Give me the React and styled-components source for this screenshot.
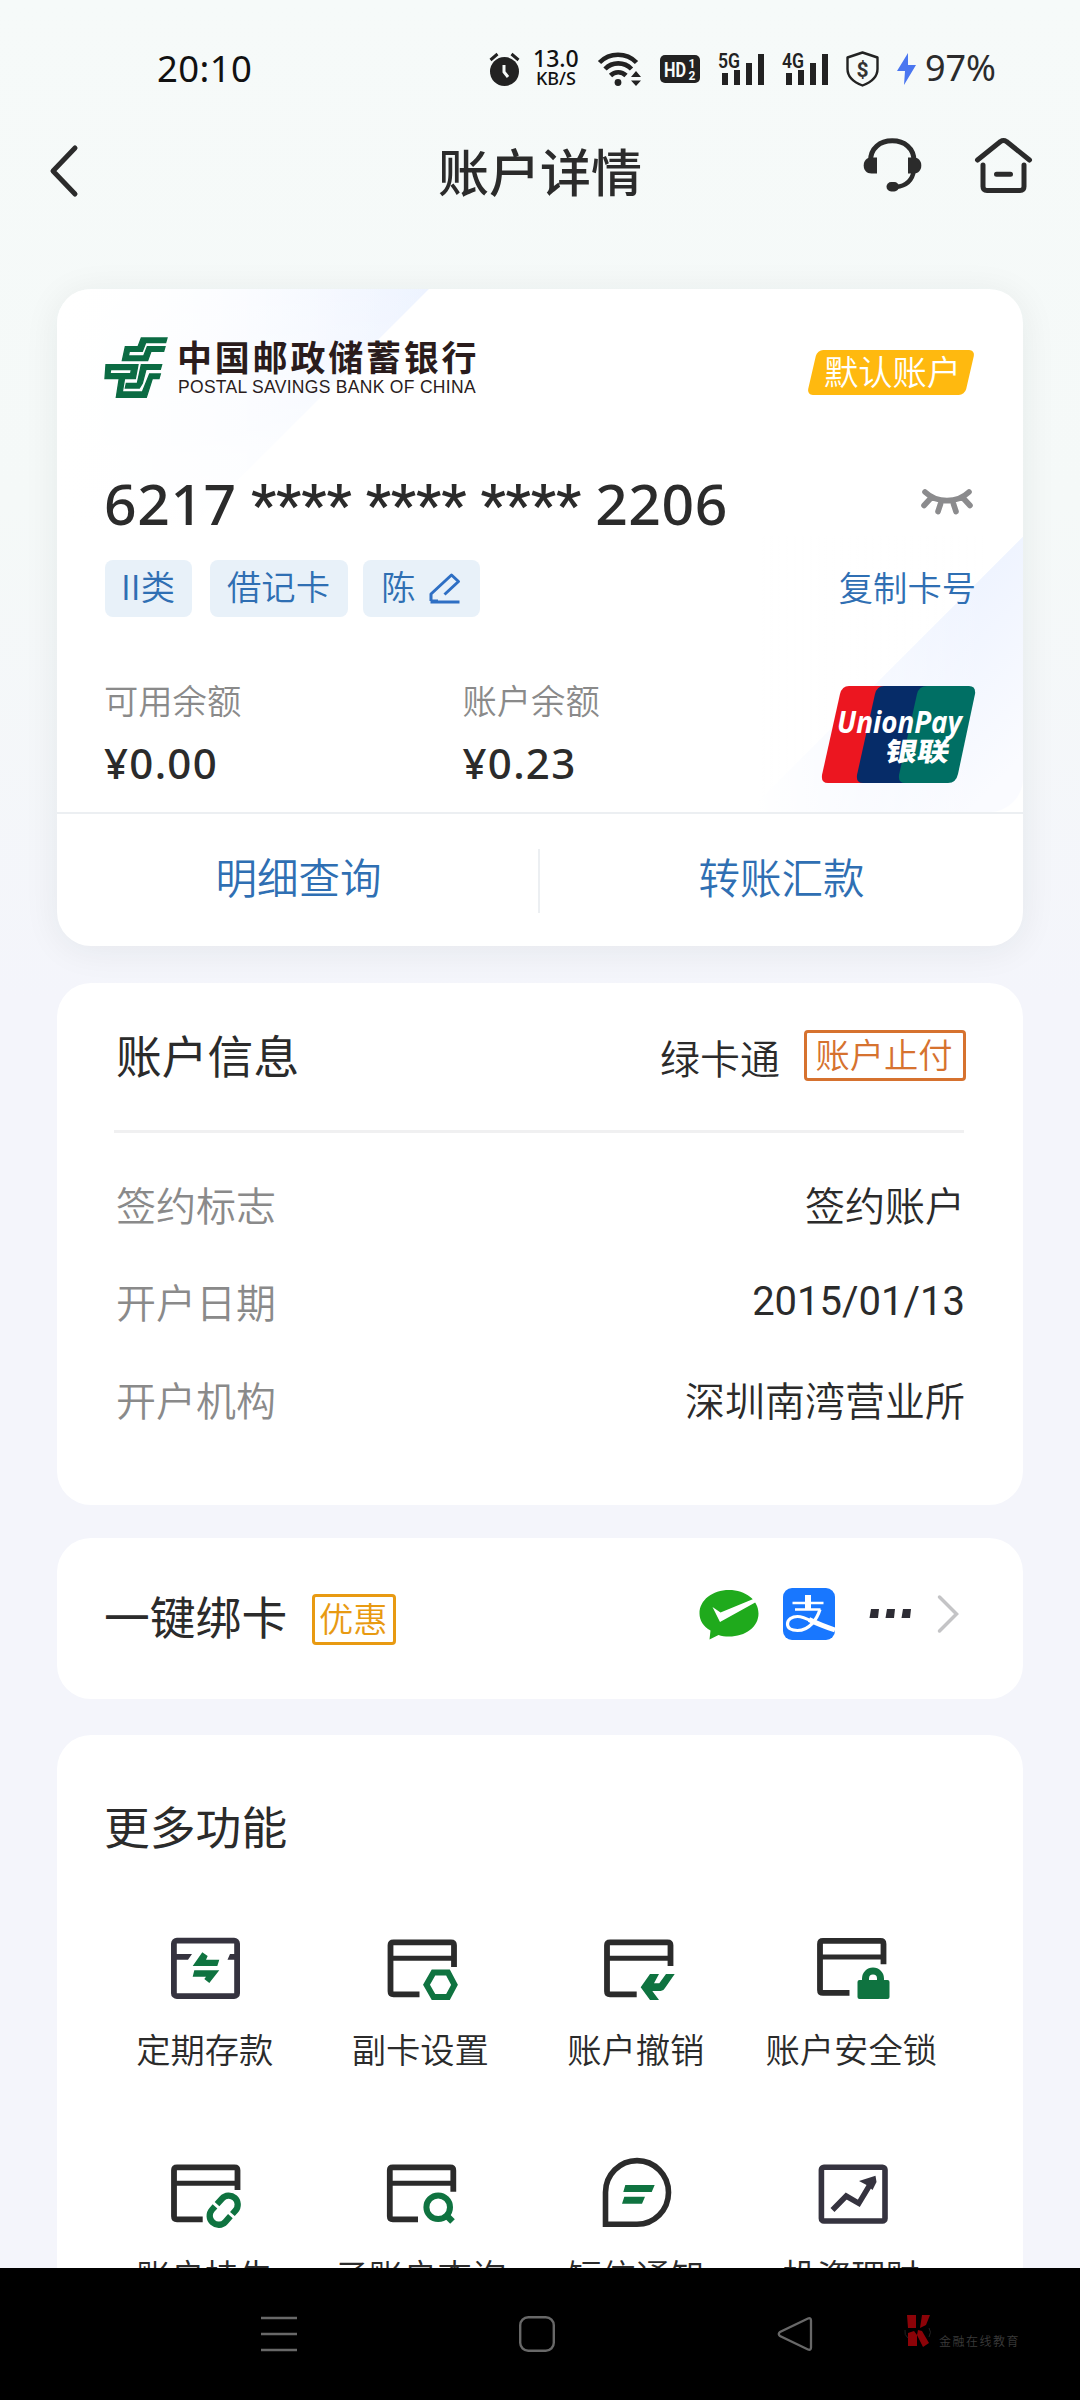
import React from "react";
import styled, { createGlobalStyle } from "styled-components";

const App = () => (
  <>
    <GlobalStyle />
    <Screen>
      <StatusBar />
      <TitleBar>
        <BackIcon />
        <Title>账户详情</Title>
        <HeadsetIcon />
        <HomeIcon />
      </TitleBar>
      <Content>
        <BankCard />
        <AccountInfo />
        <BindCard />
        <MoreFeatures />
      </Content>
      <NavBar />
    </Screen>
  </>
);

const details = [
  { label: "签约标志", value: "签约账户" },
  { label: "开户日期", value: "2015/01/13", numeric: true },
  { label: "开户机构", value: "深圳南湾营业所" },
];

function StatusBar() {
  return (
    <Status>
      <Clock>20:10</Clock>
      <StatusIcons>
        <svg width="31" height="34" viewBox="0 0 31 34">
          <circle cx="15.5" cy="19.5" r="14.5" fill="#222" />
          <path d="M1.5 8l7-6M29.5 8l-7-6" stroke="#222" strokeWidth="3" />
          <path d="M15 13v7l4 5" stroke="#f6faf9" strokeWidth="3" fill="none" />
        </svg>
        <Speed>
          <b>13.0</b>
          <span>KB/S</span>
        </Speed>
        <svg width="44" height="36" viewBox="0 0 44 36">
          <g fill="none" stroke="#222" strokeWidth="4.6">
            <path d="M1.5 11.5a26 26 0 0 1 37 0" />
            <path d="M7 18a18.5 18.5 0 0 1 26.5 0" />
            <path d="M12.5 24.5a11 11 0 0 1 15.5 0" />
          </g>
          <circle cx="20" cy="31.5" r="3.4" fill="#222" />
          <path d="M33 26l5-6 5 6zM33 29.5h10l-5 5.5z" fill="#222" />
        </svg>
        <svg width="40" height="28" viewBox="0 0 40 28">
          <rect width="40" height="28" rx="5" fill="#222" />
          <g fill="#f6faf9" fontFamily="Roboto" fontWeight="700">
            <text x="4" y="21.5" fontSize="20" textLength="22" lengthAdjust="spacingAndGlyphs">
              HD
            </text>
            <text x="28.5" y="13" fontSize="12">1</text>
            <text x="28.5" y="25" fontSize="12">2</text>
          </g>
        </svg>
        <Signal label="5G" />
        <Signal label="4G" />
        <svg width="33" height="36" viewBox="0 0 33 36">
          <path
            d="M16.5 1.5L31.5 6.5V18c0 8-7 13.5-15 16.5C8.5 31.5 1.5 26 1.5 18V6.5z"
            fill="none"
            stroke="#222"
            strokeWidth="2.4"
            strokeLinejoin="round"
          />
          <text x="16.5" y="25.5" fontSize="21" fontWeight="700" fontFamily="Roboto" textAnchor="middle" fill="#333">
            $
          </text>
        </svg>
        <svg width="20" height="32" viewBox="0 0 20 32">
          <path d="M11 0L0 18h8l-1 14L19 12h-8z" fill="#4a76f0" />
        </svg>
        <Battery>97%</Battery>
      </StatusIcons>
    </Status>
  );
}

function Signal({ label }) {
  return (
    <svg width="46" height="34" viewBox="0 0 46 34">
      <text x="0" y="15.5" fontSize="20" fontWeight="600" fontFamily="Roboto" textLength="22" lengthAdjust="spacingAndGlyphs" fill="#222">
        {label}
      </text>
      <path d="M4 21h6v12H4zM16 18h6v15h-6zM28 11h6v22h-6zM40 2h6v31h-6z" fill="#222" />
    </svg>
  );
}

const BackIcon = () => (
  <svg width="32" height="54" viewBox="0 0 32 54">
    <path d="M27 4L5 27l22 23" fill="none" stroke="#2b2b2b" strokeWidth="5" strokeLinecap="round" strokeLinejoin="round" />
  </svg>
);

const HeadsetIcon = () => (
  <svg width="60" height="60" viewBox="0 0 60 60">
    <path d="M8.5 25C8.5 12 18 4.8 30.2 4.8S52 12 52 25" fill="none" stroke="#2b2b2b" strokeWidth="5" />
    <path d="M52 34c-1.5 10-8 16-18 17" fill="none" stroke="#2b2b2b" strokeWidth="4.5" />
    <path d="M15 21.5v16H9.5C4.5 37.5 1.7 34 1.7 29.5S4.5 21.5 9.5 21.5z" fill="#2b2b2b" />
    <path d="M46 21.5v16h5.5c5 0 7.8-3.5 7.8-8s-2.8-8-7.8-8z" fill="#2b2b2b" />
    <rect x="24.5" y="46" width="12.5" height="9.5" rx="4.7" fill="#2b2b2b" />
  </svg>
);

const HomeIcon = () => (
  <svg width="60" height="60" viewBox="0 0 60 60">
    <g fill="none" stroke="#2b2b2b" strokeWidth="5" strokeLinecap="round" strokeLinejoin="round">
      <path d="M4.5 24L27.5 5.5q3-2 6 0L56.5 24" />
      <path d="M10 29v21.5q0 4 4 4h33q4 0 4-4V29M23.5 38.2h14" />
    </g>
  </svg>
);

function BankCard() {
  return (
    <Card $height={657} $raised>
      <CardFace>
        <BrandRow>
          <BankLogo />
          <BankName>
            <strong>中国邮政储蓄银行</strong>
            <span>POSTAL SAVINGS BANK OF CHINA</span>
          </BankName>
          <DefaultBadge>
            <span>默认账户</span>
          </DefaultBadge>
        </BrandRow>
        <NumberRow>
          <CardNumber>
            6217<Stars>{" **** **** **** "}</Stars>2206
          </CardNumber>
          <svg width="52" height="28" viewBox="0 0 52 28">
            <g fill="none" stroke="#8b8b8d" strokeWidth="5.6" strokeLinecap="round">
              <path d="M4 4c12 11.5 32 11.5 44 0M9 11l-6 6.5M43 11l6 6.5M19.5 16l-2.5 7.5M32.5 16l2.5 7.5" />
            </g>
          </svg>
        </NumberRow>
        <TagRow>
          <Tag $width={87}>II类</Tag>
          <Tag $width={138}>借记卡</Tag>
          <Tag $width={117}>
            陈
            <svg width="32" height="32" viewBox="0 0 32 32">
              <path
                d="M1.5 29h29M2 28v-7L22.5 2l7 6.5L15.5 21.5M2 28h7"
                fill="none"
                stroke="#2e6fc4"
                strokeWidth="3"
                strokeLinejoin="round"
              />
            </svg>
          </Tag>
          <CopyLink>复制卡号</CopyLink>
        </TagRow>
        <BalanceRow>
          <Balance label="可用余额" amount="¥0.00" />
          <Balance label="账户余额" amount="¥0.23" />
          <UnionPayLogo />
        </BalanceRow>
      </CardFace>
      <Actions>
        <Action>明细查询</Action>
        <Separator />
        <Action>转账汇款</Action>
      </Actions>
    </Card>
  );
}

const Balance = ({ label, amount }) => (
  <BalanceItem>
    <BalanceLabel>{label}</BalanceLabel>
    <Amount>{amount}</Amount>
  </BalanceItem>
);

const BankLogo = () => (
  <svg width="62" height="60" viewBox="21 24 186 180">
    <g fill="#0b6b43" stroke="#0b6b43" strokeWidth="4">
      <path d="M82 50h38l10-26h77l-4 14h-60l-10 26H94l-3 14h46l11-28h53l-4 14h-38l-10 28H73z" />
      <path fillRule="evenodd" d="M24 104h96l-8 42H21zM38 119l-2 12h62l2-12z" />
      <path d="M130 104h61l-4 14h-43l-11 42-9 14H82l3-14h33z" />
      <path d="M155 132h32l-4 14h-20l-18 56H55l9-58h16l-7 42h60z" />
    </g>
  </svg>
);

const UnionPayLogo = () => (
  <svg width="153" height="97" viewBox="0 0 153 97">
    <path d="M27 0h50L62 97H6q-7 0-6-8L18 8q2-8 9-8z" fill="#ec1620" />
    <path d="M62 0h50L95 97H41q-7 0-6-8L53 8q2-8 9-8z" fill="#062c68" />
    <path d="M105 0h42q7 0 6 8l-17 80q-2 9-10 9H83q-7 0-6-8L95 8q2-8 10-8z" fill="#006f64" />
    <text x="15" y="47" fontSize="31" fontWeight="700" fontStyle="italic" fontFamily="Open Sans, Noto Sans" textLength="125" lengthAdjust="spacingAndGlyphs" fill="#fff">
      UnionPay
    </text>
    <text transform="translate(62 74.5) skewX(-10)" fontSize="26" fontWeight="900" fontFamily="Noto Sans CJK SC" textLength="64" lengthAdjust="spacingAndGlyphs" fill="#fff">
      银联
    </text>
  </svg>
);

function AccountInfo() {
  return (
    <Card $height={522} $gap={37}>
      <InfoHead>
        <Heading>账户信息</Heading>
        <Product>绿卡通</Product>
        <Outline $color="#d6722f" $width={162}>
          账户止付
        </Outline>
      </InfoHead>
      <InfoList>
        {details.map((item) => (
          <InfoRow key={item.label} $numeric={item.numeric}>
            <dt>{item.label}</dt>
            <dd>{item.value}</dd>
          </InfoRow>
        ))}
      </InfoList>
    </Card>
  );
}

function BindCard() {
  return (
    <Card $height={161} $gap={33}>
      <BindRow>
        <Heading>一键绑卡</Heading>
        <Outline $color="#e89a12" $width={84}>
          优惠
        </Outline>
        <BindIcons>
          <svg width="60" height="51" viewBox="0 0 60 51">
            <path d="M30 1c16.5 0 29.5 10 29.5 23.5S46.5 47.5 30 47.5c-4 0-7.5-.5-10.5-1.5L10.5 50.5l1-9C4.5 37.5.5 31.5.5 24.5.5 11 13.5 1 30 1z" fill="#1faa1c" />
            <path d="M13.5 18l8 5.5L55.5 9.5l2.5 3L21 33z" fill="#fff" />
          </svg>
          <svg width="52" height="52" viewBox="0 0 52 52">
            <rect width="52" height="52" rx="9" fill="#1877ff" />
            <g fill="none" stroke="#fff">
              <path d="M9.5 15h31M12 21.5h25.5" strokeWidth="2.6" />
              <path d="M25 7v14.5" strokeWidth="6" />
              <path d="M37 21.5C34 31 26.5 42.5 14.5 42.5 8 42.5 4.5 40 4.5 36c0-4.5 4.5-7.5 10-7.5 5 0 10 2.5 15 5" strokeWidth="3.2" />
              <path d="M26 31.5C34 35.5 43 39 52 42" strokeWidth="5" />
            </g>
          </svg>
          <svg width="43" height="10" viewBox="0 0 43 10">
            <path d="M2 0h8l-1 9H.5zM18 0h8l-1 9h-8.5zM34 0h8l-1 9h-8.5z" fill="#2d2c34" />
          </svg>
          <svg width="22" height="40" viewBox="0 0 22 40">
            <path d="M2.5 3l17 17-17 17" fill="none" stroke="#c4c4c6" strokeWidth="3.5" strokeLinecap="round" />
          </svg>
        </BindIcons>
      </BindRow>
    </Card>
  );
}

// Card outline shared by most of the feature icons, cut open at the lower right
const CardOutline = ({ x = 7, y = 8.5, right = 36, bottom = 38.5 }) => (
  <g fill="none" stroke="#2b2b2b" strokeWidth="5.8">
    <path d={`M${x + 66.5} ${right}V${y + 6}q0-3-3-3H${x + 6}q-3 0-3 3v46q0 3 3 3H${bottom}`} />
    <path d={`M${x + 3} ${y + 19}h63`} strokeWidth="5" />
  </g>
);

const GREEN = "#0f7340";

const features = [
  {
    name: "定期存款",
    icon: (
      <>
        <rect x="8.9" y="10.7" width="63.2" height="55.5" rx="3" fill="none" stroke="#35333f" strokeWidth="5.8" />
        <path d="M9 24h18l-4 5.7H9zM65 24h7v5.7h-9.5z" fill="#35333f" />
        <path d="M27.7 36l9.6-13.7 5.4 3.7-1.7 3.7h13.3l-2 6.3zM29.3 40.3h25L44.3 53l-5-4 1.7-2.3H27.7z" fill={GREEN} />
      </>
    ),
  },
  {
    name: "副卡设置",
    icon: (
      <>
        <CardOutline x={7.5} y={9.3} right={37} bottom={39.5} />
        <path d="M46.5 54.8l7-12.3h14.5l6.5 12.3L68 67H53.5z" fill="none" stroke={GREEN} strokeWidth="6" />
      </>
    ),
  },
  {
    name: "账户撤销",
    icon: (
      <>
        <CardOutline x={8} y={9.3} right={36} bottom={40.7} />
        <path d="M44.7 57.3L54 44h9l-5 9.3h5.3L70 44h8.7L69 58q-1.5 3-4.3 3h-8.4l6.7 9h-9z" fill={GREEN} />
      </>
    ),
  },
  {
    name: "账户安全锁",
    icon: (
      <>
        <CardOutline x={6} y={7.9} right={34.3} bottom={38.5} />
        <rect x="46.5" y="50" width="32" height="19" rx="2" fill={GREEN} />
        <path d="M54.5 52v-3.5a7.5 7.5 0 0 1 15 0V52" fill="none" stroke={GREEN} strokeWidth="7" />
      </>
    ),
  },
  {
    name: "账户挂失",
    icon: (
      <>
        <CardOutline x={6} y={8.3} right={34} bottom={37.7} />
        <g transform="translate(58.7 54.2) rotate(-48)" fill="none" stroke={GREEN} strokeWidth="6.3">
          <path d="M-3-9h-4.5a9 9 0 0 0 0 18H0" />
          <path d="M3 9h4.5a9 9 0 0 0 0-18H0" />
        </g>
      </>
    ),
  },
  {
    name: "子账户查询",
    icon: (
      <>
        <CardOutline x={6.8} y={8.3} right={35.7} bottom={38} />
        <circle cx="58.2" cy="51.3" r="11.8" fill="none" stroke={GREEN} strokeWidth="6" />
        <path d="M65 58l7.5 7.5" stroke={GREEN} strokeWidth="6.5" />
      </>
    ),
  },
  {
    name: "短信通知",
    icon: (
      <>
        <path d="M9.5 36.2A31.5 31.8 0 1 1 41 68.2H9.5z" fill="none" stroke="#2b2b2b" strokeWidth="5.6" />
        <path d="M29.3 29h29.4l-3 7H27.3zM28.3 40.7H49l-3 7H26z" fill={GREEN} />
      </>
    ),
  },
  {
    name: "投资理财",
    icon: (
      <>
        <rect x="10.4" y="11.2" width="63.6" height="53.8" rx="2.5" fill="none" stroke="#35333f" strokeWidth="5.6" />
        <path d="M21.5 54l13.7-14 12.6 7.3L60 27" fill="none" stroke="#35333f" strokeWidth="5.5" />
        <path d="M48 25l16.5-5.2 1 6.2-4 8-5-4.5z" fill="#35333f" />
      </>
    ),
  },
];

function MoreFeatures() {
  return (
    <Card $height={700} $gap={36}>
      <FeatureHeading>更多功能</FeatureHeading>
      <FeatureGrid>
        {features.map((feature) => (
          <Feature key={feature.name}>
            <svg width="80" height="76" viewBox="0 0 80 76">
              {feature.icon}
            </svg>
            {feature.name}
          </Feature>
        ))}
      </FeatureGrid>
    </Card>
  );
}

function NavBar() {
  return (
    <Nav>
      <svg width="36" height="36" viewBox="0 0 36 36">
        <path d="M0 2h36M0 18h36M0 34h36" stroke="#686868" strokeWidth="2.5" />
      </svg>
      <svg width="36" height="36" viewBox="0 0 36 36">
        <rect x="1.2" y="1.2" width="33.6" height="33.6" rx="8" fill="none" stroke="#686868" strokeWidth="2.4" />
      </svg>
      <svg width="36" height="36" viewBox="0 0 36 36">
        <path d="M31 2.5L3 16q-2.5 2 0 4l28 13.5q3 1 3-2v-27q0-3-3-2z" fill="none" stroke="#686868" strokeWidth="2.3" />
      </svg>
      <Watermark>
        <svg width="28" height="34" viewBox="0 0 28 34">
          <path d="M3 1h9v13H4zM18 1h8l-4 10-6 3zM4 19l6-2 3 4v11H4zM14 16l4 1 7 12-6 4-6-12z" fill="#8c0308" />
          <path d="M1 16q-1 5 3 8M25 14q3 4 0 9" stroke="#222" fill="none" />
        </svg>
        <span>金融在线教育</span>
      </Watermark>
    </Nav>
  );
}

const GlobalStyle = createGlobalStyle`
  body {
    margin: 0;
    background: #f4f5fa;
    font-family: "Noto Sans CJK SC", sans-serif;
    font-weight: 350;
    color: #2b2b2b;
  }
  svg {
    display: block;
    flex: none;
    overflow: visible;
  }
`;

const Screen = styled.div`
  width: 1080px;
  height: 2400px;
  display: flex;
  flex-direction: column;
  overflow: hidden;
  background: linear-gradient(#f6faf9 0, #f5f9f8 500px, #f4f5fb 1000px);
`;

const Status = styled.header`
  height: 138px;
  box-sizing: border-box;
  flex: none;
  display: flex;
  align-items: center;
  justify-content: space-between;
  padding: 0 84px 0 157px;
  font-family: "Noto Sans", sans-serif;
`;

const Clock = styled.time`
  font-size: 36.5px;
  line-height: 40px;
  margin-top: -2px;
  font-weight: 450;
  letter-spacing: 0.4px;
  color: #111;
`;

const StatusIcons = styled.div`
  display: flex;
  align-items: center;
  gap: 18px;
`;

const Speed = styled.div`
  display: flex;
  flex-direction: column;
  align-items: center;
  width: 46px;
  margin: -3px 1px 0 -5px;
  color: #111;
  b {
    font-size: 23px;
    line-height: 21px;
    font-weight: 500;
  }
  span {
    font-size: 18px;
    line-height: 18px;
    font-weight: 500;
  }
`;

const Battery = styled.span`
  font-size: 36px;
  line-height: 40px;
  font-weight: 450;
  margin: -2px 0 0 -10px;
`;

const TitleBar = styled.div`
  height: 151px;
  box-sizing: border-box;
  flex: none;
  display: flex;
  align-items: flex-start;
  padding: 0 47px 0 48px;
  & > svg {
    margin-top: -2px;
  }
  & > svg:first-child {
    margin-top: 6px;
  }
  & > svg:last-child {
    margin-left: 51px;
  }
`;

const Title = styled.h1`
  margin: -3px 0 0;
  flex: 1;
  padding-left: 138px;
  text-align: center;
  font-size: 51px;
  line-height: 70px;
  font-weight: 500;
`;

const Content = styled.main`
  flex: 1;
  min-height: 0;
  overflow: hidden;
  margin-top: -60px;
  padding: 60px 57px 0;
  display: flex;
  flex-direction: column;
`;

const Card = styled.section`
  flex: none;
  height: ${({ $height }) => $height}px;
  margin-top: ${({ $gap }) => $gap || 0}px;
  box-sizing: border-box;
  border-radius: 34px;
  background: #fff;
  box-shadow: ${({ $raised }) => ($raised ? "0 4px 36px rgba(30, 40, 40, 0.07)" : "none")};
`;

const CardFace = styled.div`
  height: 523px;
  box-sizing: border-box;
  padding: 49px 48px 0;
  border-radius: 34px 34px 34px 0;
  background: linear-gradient(90deg, #fff 0, rgba(255, 255, 255, 0) 380px) 0 0 / 400px 240px no-repeat,
    linear-gradient(0deg, #fff 0, rgba(255, 255, 255, 0) 100%) 0 0 / 400px 240px no-repeat,
    linear-gradient(135deg, #fff 0, #edf3ff 58%, #fff 58.2%) 0 0 / 400px 240px no-repeat,
    linear-gradient(90deg, #fff 0, rgba(255, 255, 255, 0) 85%) 100% 100% / 266px 276px no-repeat,
    linear-gradient(135deg, transparent 49%, #eff4ff 49.2%, #fafbff 90%) 100% 100% / 265px 276px no-repeat;
`;

const BrandRow = styled.div`
  display: flex;
  height: 60px;
`;

const BankName = styled.div`
  display: flex;
  flex-direction: column;
  margin: -1px 0 0 10px;
  color: #2a1c1c;
  strong {
    font-size: 35px;
    line-height: 37px;
    letter-spacing: 2.8px;
    font-weight: 700;
  }
  span {
    font-family: "Liberation Sans", sans-serif;
    font-size: 17.5px;
    line-height: 20px;
    margin: 3px 0 0 1px;
    letter-spacing: 0.3px;
    white-space: nowrap;
  }
`;

const DefaultBadge = styled.div`
  width: 158px;
  height: 45px;
  margin: 12px 5px 0 auto;
  border-radius: 6px;
  background: #ffb90f;
  transform: skewX(-13deg);
  span {
    display: block;
    transform: skewX(13deg);
    text-align: center;
    text-indent: 2px;
    color: #fff;
    font-size: 34.3px;
    line-height: 40px;
  }
`;

const NumberRow = styled.div`
  display: flex;
  justify-content: space-between;
  align-items: center;
  height: 80px;
  margin-top: 66px;
  & > svg {
    margin: -5px 2px 0 0;
  }
`;

const CardNumber = styled.div`
  font-family: "Noto Sans", sans-serif;
  font-size: 57px;
  line-height: 80px;
  font-weight: 460;
  letter-spacing: 0.6px;
  margin-left: -1px;
  white-space: pre;
`;

const Stars = styled.span`
  font-family: Roboto, sans-serif;
  letter-spacing: -0.1px;
`;

const TagRow = styled.div`
  display: flex;
  align-items: center;
  margin-top: 16px;
  font-size: 34.3px;
  color: #2f6fb3;
`;

const Tag = styled.span`
  width: ${({ $width }) => $width}px;
  height: 57px;
  line-height: 51px;
  display: flex;
  justify-content: center;
  gap: 13px;
  margin-right: 18px;
  border-radius: 8px;
  background: #e8f1f9;
  text-indent: -1px;
  svg {
    margin-top: 13px;
  }
  & + & + & {
    margin-left: -3px;
  }
`;

const CopyLink = styled.a`
  margin: -4px -1px 0 auto;
  line-height: 53px;
`;

const BalanceRow = styled.div`
  display: flex;
  margin-top: 60px;
  & > svg {
    margin: 9px 0 0 auto;
  }
`;

const BalanceItem = styled.div`
  width: 360px;
`;

const BalanceLabel = styled.div`
  font-size: 34.3px;
  line-height: 44px;
  color: #8a8a8a;
  margin-left: -1px;
`;

const Amount = styled.div`
  font-family: "Noto Sans", sans-serif;
  font-size: 42px;
  line-height: 60px;
  font-weight: 470;
  letter-spacing: 1.3px;
  margin: 12px 0 0 -1px;
`;

const Actions = styled.div`
  display: flex;
  align-items: center;
  height: 134px;
  box-sizing: border-box;
  border-top: 2px solid #eceff2;
`;

const Action = styled.a`
  flex: 1;
  text-align: center;
  font-size: 41.5px;
  line-height: 60px;
  padding-bottom: 9px;
  color: #2f6fb3;
`;

const Separator = styled.i`
  width: 2px;
  height: 64px;
  margin: 2px 0 0 -2px;
  background: #eceff2;
`;

const InfoHead = styled.div`
  display: flex;
  align-items: center;
  height: 150px;
  box-sizing: border-box;
  margin: 0 59px 0 57px;
  padding: 0 0 2px 2px;
  border-bottom: 3px solid #f0f0f1;
`;

const Heading = styled.h2`
  margin: -3px 0 0;
  font-size: 45.8px;
  line-height: 60px;
  font-weight: 370;
`;

const Product = styled.span`
  margin: 2px 24px 0 auto;
  font-size: 40px;
  line-height: 50px;
`;

const Outline = styled.span`
  width: ${({ $width }) => $width}px;
  height: 51px;
  box-sizing: border-box;
  border: 3px solid ${({ $color }) => $color};
  border-radius: 4px;
  color: ${({ $color }) => $color};
  font-size: 34.3px;
  line-height: 41px;
  text-align: center;
  text-indent: -2px;
  margin-right: -2px;
`;

const InfoList = styled.dl`
  margin: 0;
  padding: 22px 58px 0 59px;
`;

const InfoRow = styled.div`
  display: flex;
  justify-content: space-between;
  height: 97.5px;
  align-items: center;
  font-size: 40px;
  dt {
    color: #8a8a8a;
  }
  dd {
    margin: 0;
    font-family: Roboto, "Noto Sans CJK SC", sans-serif;
    font-weight: ${({ $numeric }) => ($numeric ? 400 : 350)};
  }
`;

const BindRow = styled.div`
  display: flex;
  align-items: center;
  height: 161px;
  padding: 0 64px 0 47px;
  ${Heading} {
    margin-top: -7px;
  }
  ${Outline} {
    margin: 2px 0 0 25px;
  }
`;

const BindIcons = styled.div`
  display: flex;
  align-items: center;
  gap: 24px;
  margin: -9px 0 0 auto;
  svg:nth-child(3) {
    margin: 0 1px 0 10px;
  }
`;

const FeatureHeading = styled(Heading)`
  margin-top: 0;
  padding: 60px 47px 0;
`;

const FeatureGrid = styled.div`
  display: grid;
  grid-template-columns: repeat(4, 215.5px);
  grid-auto-rows: 226px;
  margin: 75px 0 0 40px;
`;

const Feature = styled.div`
  display: flex;
  flex-direction: column;
  align-items: center;
  font-size: 34.3px;
  line-height: 50px;
  gap: 17px;
`;

const Nav = styled.nav`
  flex: none;
  height: 132px;
  box-sizing: border-box;
  display: flex;
  gap: 222px;
  padding: 48px 0 0 261px;
  background: #000;
`;

const Watermark = styled.div`
  display: flex;
  align-items: flex-end;
  height: 32px;
  margin-left: -131px;
  gap: 7px;
  font-size: 12px;
  line-height: 14px;
  letter-spacing: 1.5px;
  white-space: nowrap;
  color: #3a3a3a;
`;

export default App;
